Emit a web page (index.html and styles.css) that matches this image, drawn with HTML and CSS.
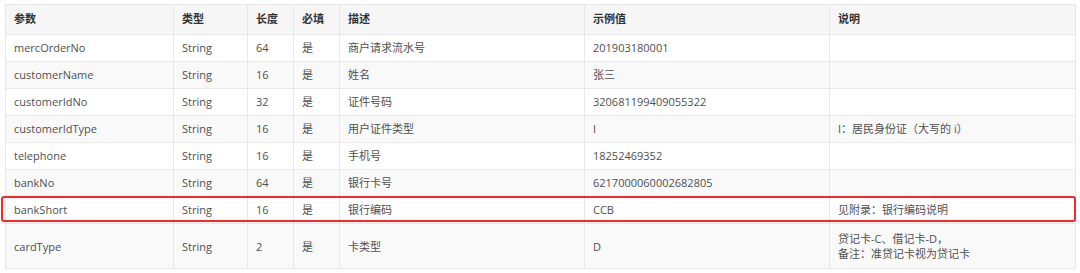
FILE: index.html
```html
<!DOCTYPE html>
<html lang="zh">
<head>
<meta charset="utf-8">
<link rel="stylesheet" href="styles.css">
</head>
<body>
<div class="wrap">
<table class="params">
<colgroup>
<col class="c1"><col class="c2"><col class="c3"><col class="c4"><col class="c5"><col class="c6"><col class="c7">
</colgroup>
<thead>
<tr><th>参数</th><th>类型</th><th>长度</th><th>必填</th><th>描述</th><th>示例值</th><th>说明</th></tr>
</thead>
<tbody>
<tr><td>mercOrderNo</td><td>String</td><td>64</td><td>是</td><td>商户请求流水号</td><td>201903180001</td><td></td></tr>
<tr><td>customerName</td><td>String</td><td>16</td><td>是</td><td>姓名</td><td>张三</td><td></td></tr>
<tr><td>customerIdNo</td><td>String</td><td>32</td><td>是</td><td>证件号码</td><td>320681199409055322</td><td></td></tr>
<tr><td>customerIdType</td><td>String</td><td>16</td><td>是</td><td>用户证件类型</td><td>I</td><td>I：居民身份证（大写的 i）</td></tr>
<tr><td>telephone</td><td>String</td><td>16</td><td>是</td><td>手机号</td><td>18252469352</td><td></td></tr>
<tr><td>bankNo</td><td>String</td><td>64</td><td>是</td><td>银行卡号</td><td>6217000060002682805</td><td></td></tr>
<tr><td>bankShort</td><td>String</td><td>16</td><td>是</td><td>银行编码</td><td>CCB</td><td>见附录：银行编码说明</td></tr>
<tr class="tall"><td>cardType</td><td>String</td><td>2</td><td>是</td><td>卡类型</td><td>D</td><td>贷记卡-C、借记卡-D，<br>备注：准贷记卡视为贷记卡</td></tr>
</tbody>
</table>
<div class="highlight"></div>
</div>
</body>
</html>
```

FILE: styles.css
```css
html, body {
  margin: 0;
  padding: 0;
  background: #ffffff;
}
body {
  font-family: "Open Sans", "Noto Sans CJK SC", sans-serif;
  font-size: 11px;
  color: #505050;
}
.wrap {
  position: relative;
  padding: 4px 0 0 5px;
}
.params {
  border-collapse: collapse;
  table-layout: fixed;
  width: 1070px;
}
.c1 { width: 168px; }
.c2 { width: 74px; }
.c3 { width: 46px; }
.c4 { width: 46px; }
.c5 { width: 245px; }
.c6 { width: 245px; }
.c7 { width: 246px; }
.params th,
.params td {
  border: 1px solid #e8e8e8;
  text-align: left;
  vertical-align: middle;
  line-height: 14px;
  white-space: nowrap;
}
.params th {
  background: #f6f6f7;
  color: #333333;
  font-weight: 700;
  padding: 7px 8px 8px;
}
.params td {
  padding: 6px 8px;
}
.params tbody tr:nth-child(even) td {
  background: #f9f9f9;
}
.params tr.tall td {
  height: 32px;
  line-height: 15px;
  padding-top: 6px;
  padding-bottom: 6px;
}
.highlight {
  position: absolute;
  left: 1px;
  top: 196px;
  width: 1071px;
  height: 22px;
  border: 2px solid #ff2626;
  border-radius: 3px;
  pointer-events: none;
}
```
